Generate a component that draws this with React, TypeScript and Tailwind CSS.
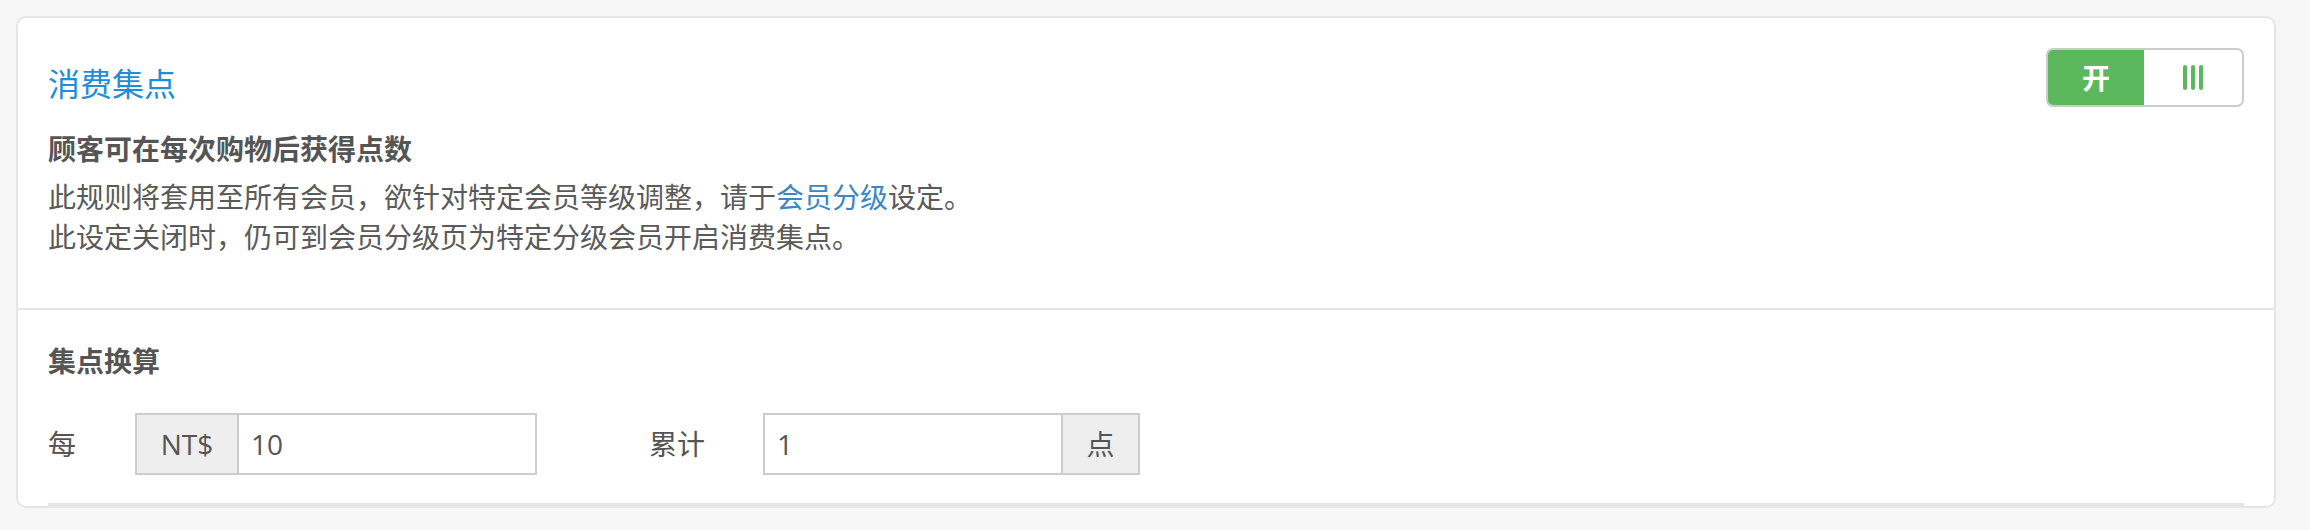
import React from "react";

const font = {
  fontFamily: '"Open Sans", "Noto Sans CJK SC", sans-serif',
};

// on/off switch, currently "on"
function Toggle() {
  return (
    <div className="flex h-[59px] w-[198px] overflow-hidden rounded-[7px] border-2 border-[#cccccc] bg-white">
      <div className="flex w-[96px] items-center justify-center bg-[#5cb85c] text-[28px] font-bold text-white">
        开
      </div>
      <div className="flex flex-1 items-center justify-center gap-[4px]">
        <span className="h-[25px] w-[4px] rounded-full bg-[#5cb85c]" />
        <span className="h-[25px] w-[4px] rounded-full bg-[#5cb85c]" />
        <span className="h-[25px] w-[4px] rounded-full bg-[#5cb85c]" />
      </div>
    </div>
  );
}

function Addon({ children, className = "" }: { children: React.ReactNode; className?: string }) {
  return (
    <div
      className={`flex items-center justify-center bg-[#eeeeee] text-[28px] text-[#555] ${className}`}
    >
      {children}
    </div>
  );
}

export default function App() {
  return (
    <div className="min-h-[530px] w-[2310px] bg-[#f7f7f7] pt-4" style={font}>
      <div className="ml-4 w-[2260px] overflow-hidden rounded-[10px] border-2 border-[#e5e5e5] bg-white">
        {/* rule summary */}
        <div className="px-[30px] pt-[30px] pb-[51px]">
          <div className="flex items-start justify-between">
            <h2 className="mt-[14px] text-[32px] leading-[44px] text-[#1d8ed8]">消费集点</h2>
            <Toggle />
          </div>
          <p className="mt-[22px] text-[28px] leading-[40px] font-bold text-[#555]">
            顾客可在每次购物后获得点数
          </p>
          <div className="mt-[8px] text-[28px] leading-[40px] text-[#5a5a5a]">
            <p>
              此规则将套用至所有会员，欲针对特定会员等级调整，请于
              <a className="text-[#3a87c6]">会员分级</a>
              设定。
            </p>
            <p>此设定关闭时，仍可到会员分级页为特定分级会员开启消费集点。</p>
          </div>
        </div>

        <div className="h-[2px] bg-[#e5e5e5]" />

        {/* conversion rate */}
        <div className="px-[30px] pt-[31px]">
          <h3 className="text-[28px] leading-[40px] font-bold text-[#555]">集点换算</h3>
          <div className="mt-[32px] flex items-center text-[28px] text-[#555]">
            <span className="w-[87px]">每</span>
            <div className="flex h-[62px] w-[402px] border-2 border-[#cccccc]">
              <Addon className="w-[102px] border-r-2 border-[#cccccc]">NT$</Addon>
              <div className="flex flex-1 items-center pl-[12px]">10</div>
            </div>
            <span className="ml-[112px] w-[114px]">累计</span>
            <div className="flex h-[62px] w-[377px] border-2 border-[#cccccc]">
              <div className="flex flex-1 items-center pl-[12px]">1</div>
              <Addon className="w-[77px] border-l-2 border-[#cccccc]">点</Addon>
            </div>
          </div>
          <div className="mt-[28px] h-[3px] bg-[#e6e6e6]" />
        </div>
      </div>
    </div>
  );
}
